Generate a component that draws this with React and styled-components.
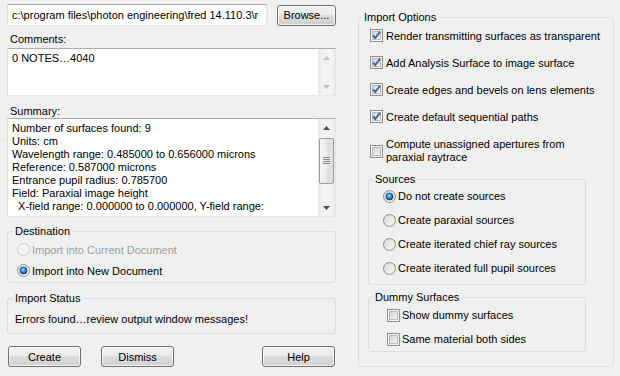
import styled, { createGlobalStyle } from "styled-components";

// 全局样式
const GlobalStyle = createGlobalStyle`
  html, body {
    margin: 0;
    padding: 0;
    background: #f0f0f0;
  }
  body {
    font-family: "Liberation Sans", Arial, sans-serif;
    font-size: 11px;
    color: #000;
  }
`;

const Dialog = styled.div`
  display: flex;
  width: 620px;
  height: 376px;
  padding-left: 7px;
  box-sizing: border-box;
  background: #f0f0f0;
`;

const LeftColumn = styled.div`
  display: flex;
  flex-direction: column;
  width: 329px;
  padding-top: 4px;
`;

const RightColumn = styled.div`
  margin-left: 22px;
  padding-top: 11px;
`;

const PathRow = styled.div`
  display: flex;
  align-items: center;
  height: 22px;
`;

const TextField = styled.div`
  width: 260px;
  height: 22px;
  box-sizing: border-box;
  border: 1px solid;
  border-color: #abadb3 #e2e3ea #e3e9ef #dbdfe6;
  background: #fff;
  padding: 0 4px;
  line-height: 20px;
  white-space: nowrap;
  overflow: hidden;
`;

const FieldLabel = styled.div`
  margin-top: ${(p) => p.$mt}px;
  line-height: 13px;
  padding-left: 3px;
`;

const TextArea = styled.div`
  display: flex;
  margin-top: ${(p) => p.$mt}px;
  height: ${(p) => p.$h}px;
  box-sizing: border-box;
  border: 1px solid;
  border-color: #abadb3 #e2e3ea #e3e9ef #dbdfe6;
  background: #fff;
`;

const TextContent = styled.div`
  flex: 1;
  padding: ${(p) => p.$pt}px 4px 0 4px;
  line-height: 13px;
  white-space: pre;
  overflow: hidden;
`;

const ScrollBar = styled.div`
  display: flex;
  flex-direction: column;
  width: 17px;
  flex-shrink: 0;
  background: linear-gradient(to right, #e8e8e8, #f3f3f3 25%, #f3f3f3 75%, #ececec);
`;

const ArrowButton = styled.div`
  height: 17px;
  display: flex;
  align-items: center;
  justify-content: center;
`;

const Track = styled.div`
  flex: 1;
  display: flex;
  flex-direction: column;
  align-items: center;
`;

const Thumb = styled.div`
  width: 15px;
  height: ${(p) => p.$h}px;
  margin-top: ${(p) => p.$top}px;
  box-sizing: border-box;
  border: 1px solid #9a9a9a;
  border-radius: 2px;
  background: linear-gradient(to right, #f4f4f4, #ebebeb 50%, #dcdcdc 50%, #e4e4e4);
  display: flex;
  align-items: center;
  justify-content: center;
`;

const GroupBox = styled.fieldset`
  margin: ${(p) => p.$mt || 0}px 0 0 ${(p) => p.$ml || 0}px;
  padding: 0 0 ${(p) => p.$pb || 0}px 0;
  width: ${(p) => p.$w}px;
  height: ${(p) => (p.$h ? `${p.$h}px` : "auto")};
  border: 1px solid #d5dfe5;
  border-radius: 3px;
  box-sizing: border-box;
  min-width: 0;
`;

const Legend = styled.legend`
  margin-left: ${(p) => p.$offset}px;
  padding: 0 2px;
  line-height: 13px;
`;

const OptionList = styled.div`
  display: flex;
  flex-direction: column;
  margin-top: ${(p) => p.$mt || 0}px;
  padding-left: ${(p) => p.$pl || 0}px;
`;

const OptionRow = styled.div`
  display: flex;
  align-items: center;
  gap: ${(p) => p.$gap || 3}px;
  height: ${(p) => p.$h}px;
  color: ${(p) => (p.$disabled ? "#a0a0a0" : "#000")};
  white-space: nowrap;
`;

const ComputeRow = styled.div`
  display: flex;
  align-items: center;
  gap: 3px;
  margin-top: 8px;
  padding-left: 11px;
  line-height: 13px;
`;

const StatusText = styled.div`
  height: 28px;
  line-height: 28px;
  padding-left: 7px;
  white-space: nowrap;
`;

const ButtonRow = styled.div`
  display: flex;
  margin-top: 12px;
  padding: 0 1px;
`;

const Button = styled.button`
  width: ${(p) => p.$w}px;
  height: 21px;
  margin-left: ${(p) => (p.$push ? "auto" : `${p.$ml || 0}px`)};
  padding: 0;
  font: inherit;
  color: #000;
  border: 1px solid #707070;
  border-radius: 3px;
  background: linear-gradient(#f2f2f2 0%, #ebebeb 50%, #dddddd 50%, #cfcfcf 100%);
  box-shadow: inset 0 0 0 1px rgba(255, 255, 255, 0.75);
`;

function Arrow({ up, disabled }) {
  const color = disabled ? "#c2c2c2" : "#4d4d4d";
  return (
    <svg width="7" height="4" viewBox="0 0 7 4">
      <polygon points={up ? "0,4 3.5,0 7,4" : "0,0 7,0 3.5,4"} fill={color} />
    </svg>
  );
}

function VScroll({ disabled, thumbTop, thumbHeight }) {
  return (
    <ScrollBar>
      <ArrowButton>
        <Arrow up disabled={disabled} />
      </ArrowButton>
      <Track>
        {!disabled && (
          <Thumb $top={thumbTop} $h={thumbHeight}>
            <svg width="7" height="8" viewBox="0 0 7 8">
              {[0.5, 2.5, 4.5, 6.5].map((y) => (
                <line key={y} x1="0" y1={y} x2="7" y2={y} stroke="#8a8a8a" strokeWidth="1" />
              ))}
            </svg>
          </Thumb>
        )}
      </Track>
      <ArrowButton>
        <Arrow disabled={disabled} />
      </ArrowButton>
    </ScrollBar>
  );
}

function CheckBox({ checked }) {
  return (
    <svg width="13" height="13" viewBox="0 0 13 13" style={{ flexShrink: 0 }}>
      <defs>
        <linearGradient id="cbFill" x1="0" y1="0" x2="1" y2="1">
          <stop offset="0" stopColor="#cdd1d6" />
          <stop offset="1" stopColor="#f7f7f7" />
        </linearGradient>
      </defs>
      <rect x="0.5" y="0.5" width="12" height="12" fill="#f5f5f5" stroke="#8f8f8f" />
      <rect x="2.5" y="2.5" width="8" height="8" fill="url(#cbFill)" stroke="#b7bcc2" />
      {checked && (
        <path d="M3 6.3 L5.2 9 L10.2 2.6" fill="none" stroke="#4a5f98" strokeWidth="1.9" />
      )}
    </svg>
  );
}

function Radio({ checked, disabled }) {
  return (
    <svg width="13" height="13" viewBox="0 0 13 13" style={{ flexShrink: 0 }}>
      <defs>
        <linearGradient id="rbFill" x1="0" y1="0" x2="1" y2="1">
          <stop offset="0" stopColor="#d9d9d9" />
          <stop offset="1" stopColor="#fbfbfb" />
        </linearGradient>
        <radialGradient id="rbDot" cx="0.45" cy="0.4" r="0.6">
          <stop offset="0" stopColor="#9ae6fb" />
          <stop offset="0.55" stopColor="#2f86cc" />
          <stop offset="1" stopColor="#0e3b78" />
        </radialGradient>
      </defs>
      <circle
        cx="6.5"
        cy="6.5"
        r="6"
        fill={disabled ? "#f4f4f4" : "url(#rbFill)"}
        stroke={disabled ? "#cacaca" : "#8f8f8f"}
      />
      {checked && <circle cx="6.5" cy="6.5" r="3.6" fill="url(#rbDot)" stroke="#1a3f70" strokeWidth="0.7" />}
    </svg>
  );
}

const summaryLines = [
  "Number of surfaces found: 9",
  "Units: cm",
  "Wavelength range: 0.485000 to 0.656000 microns",
  "Reference: 0.587000 microns",
  "Entrance pupil radius: 0.785700",
  "Field: Paraxial image height",
  "  X-field range: 0.000000 to 0.000000, Y-field range:",
];

const importOptions = [
  { label: "Render transmitting surfaces as transparent", checked: true },
  { label: "Add Analysis Surface to image surface", checked: true },
  { label: "Create edges and bevels on lens elements", checked: true },
  { label: "Create default sequential paths", checked: true },
];

const sources = [
  "Do not create sources",
  "Create paraxial sources",
  "Create iterated chief ray sources",
  "Create iterated full pupil sources",
];

export default function App() {
  return (
    <>
      <GlobalStyle />
      <Dialog>
        <LeftColumn>
          <PathRow>
            <TextField>c:\program files\photon engineering\fred 14.110.3\r</TextField>
            <Button $w={59} $ml={10}>
              Browse...
            </Button>
          </PathRow>

          <FieldLabel $mt={7}>Comments:</FieldLabel>
          <TextArea $mt={2} $h={48}>
            <TextContent $pt={3}>0 NOTES…4040</TextContent>
            <VScroll disabled />
          </TextArea>

          <FieldLabel $mt={9}>Summary:</FieldLabel>
          <TextArea $mt={0} $h={99}>
            <TextContent $pt={3}>{summaryLines.join("\n")}</TextContent>
            <VScroll thumbTop={2} thumbHeight={46} />
          </TextArea>

          <GroupBox $mt={8} $w={329} $pb={1}>
            <Legend $offset={5}>Destination</Legend>
            <OptionList $mt={1} $pl={9}>
              <OptionRow $h={21} $gap={2} $disabled>
                <Radio disabled />
                Import into Current Document
              </OptionRow>
              <OptionRow $h={21} $gap={2}>
                <Radio checked />
                Import into New Document
              </OptionRow>
            </OptionList>
          </GroupBox>

          <GroupBox $mt={9} $w={329}>
            <Legend $offset={5}>Import Status</Legend>
            <StatusText>Errors found…review output window messages!</StatusText>
          </GroupBox>

          <ButtonRow>
            <Button $w={73}>Create</Button>
            <Button $w={73} $ml={20}>
              Dismiss
            </Button>
            <Button $w={73} $push>
              Help
            </Button>
          </ButtonRow>
        </LeftColumn>

        <RightColumn>
          <GroupBox $w={256} $h={356}>
            <Legend $offset={3}>Import Options</Legend>
            <OptionList $mt={-2} $pl={11}>
              {importOptions.map((opt) => (
                <OptionRow key={opt.label} $h={27}>
                  <CheckBox checked={opt.checked} />
                  {opt.label}
                </OptionRow>
              ))}
            </OptionList>
            <ComputeRow>
              <CheckBox />
              <span>
                Compute unassigned apertures from
                <br />
                paraxial raytrace
              </span>
            </ComputeRow>

            <GroupBox $mt={9} $ml={9} $w={218} $pb={4}>
              <Legend $offset={4}>Sources</Legend>
              <OptionList $mt={-2} $pl={14}>
                {sources.map((label, i) => (
                  <OptionRow key={label} $h={24} $gap={2}>
                    <Radio checked={i === 0} />
                    {label}
                  </OptionRow>
                ))}
              </OptionList>
            </GroupBox>

            <GroupBox $mt={6} $ml={9} $w={218}>
              <Legend $offset={4}>Dummy Surfaces</Legend>
              <OptionList $mt={-1} $pl={18}>
                <OptionRow $h={24} $gap={2}>
                  <CheckBox />
                  Show dummy surfaces
                </OptionRow>
                <OptionRow $h={24} $gap={2}>
                  <CheckBox />
                  Same material both sides
                </OptionRow>
              </OptionList>
            </GroupBox>
          </GroupBox>
        </RightColumn>
      </Dialog>
    </>
  );
}
